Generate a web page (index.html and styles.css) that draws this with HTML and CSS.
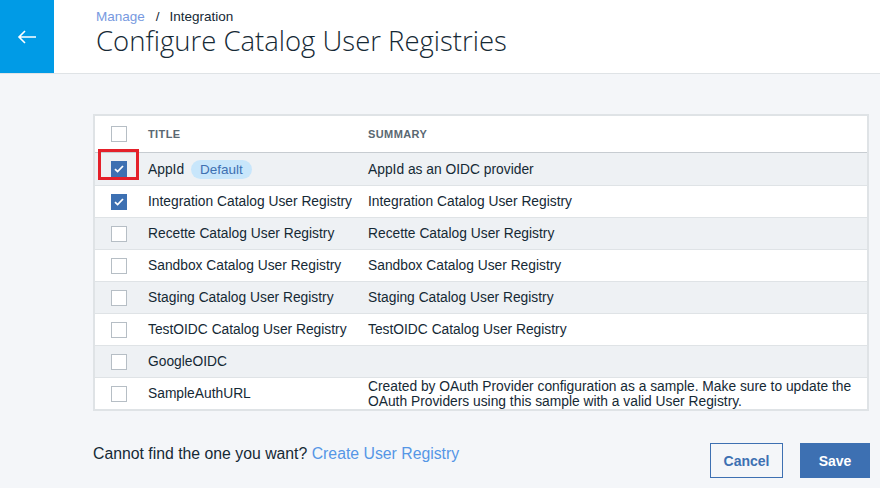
FILE: index.html
```html
<!DOCTYPE html>
<html lang="en">
<head>
<meta charset="utf-8">
<title>Configure Catalog User Registries</title>
<link rel="stylesheet" href="styles.css">
</head>
<body>
<header class="topbar">
  <div class="back">
    <svg width="20" height="14" viewBox="0 0 20 14" aria-hidden="true"><path d="M19 7H2M8 1L2 7l6 6" fill="none" stroke="#fff" stroke-width="1.6"/></svg>
  </div>
  <div class="heading">
    <div class="crumbs"><a class="crumb-link">Manage</a><span class="sep">/</span><span>Integration</span></div>
    <h1 class="title">Configure Catalog User Registries</h1>
  </div>
</header>
<main class="content">
  <div class="table">
    <div class="row head">
      <div class="cell check"><span class="box"></span></div>
      <div class="cell tcol">TITLE</div>
      <div class="cell scol">SUMMARY</div>
    </div>
    <div class="row alt">
      <div class="cell check"><span class="box on"><svg width="10" height="8" viewBox="0 0 10 8"><path d="M1 4.2l2.6 2.4L9 1" fill="none" stroke="#fff" stroke-width="1.8"/></svg></span><span class="hl"></span></div>
      <div class="cell tcol">AppId <span class="tag">Default</span></div>
      <div class="cell scol">AppId as an OIDC provider</div>
    </div>
    <div class="row">
      <div class="cell check"><span class="box on"><svg width="10" height="8" viewBox="0 0 10 8"><path d="M1 4.2l2.6 2.4L9 1" fill="none" stroke="#fff" stroke-width="1.8"/></svg></span></div>
      <div class="cell tcol">Integration Catalog User Registry</div>
      <div class="cell scol">Integration Catalog User Registry</div>
    </div>
    <div class="row alt">
      <div class="cell check"><span class="box"></span></div>
      <div class="cell tcol">Recette Catalog User Registry</div>
      <div class="cell scol">Recette Catalog User Registry</div>
    </div>
    <div class="row">
      <div class="cell check"><span class="box"></span></div>
      <div class="cell tcol">Sandbox Catalog User Registry</div>
      <div class="cell scol">Sandbox Catalog User Registry</div>
    </div>
    <div class="row alt">
      <div class="cell check"><span class="box"></span></div>
      <div class="cell tcol">Staging Catalog User Registry</div>
      <div class="cell scol">Staging Catalog User Registry</div>
    </div>
    <div class="row">
      <div class="cell check"><span class="box"></span></div>
      <div class="cell tcol">TestOIDC Catalog User Registry</div>
      <div class="cell scol">TestOIDC Catalog User Registry</div>
    </div>
    <div class="row alt">
      <div class="cell check"><span class="box"></span></div>
      <div class="cell tcol">GoogleOIDC</div>
      <div class="cell scol"></div>
    </div>
    <div class="row last">
      <div class="cell check"><span class="box"></span></div>
      <div class="cell tcol">SampleAuthURL</div>
      <div class="cell scol two">Created by OAuth Provider configuration as a sample. Make sure to update the OAuth Providers using this sample with a valid User Registry.</div>
    </div>
  </div>
  <div class="footer">
    <p class="hint">Cannot find the one you want? <a class="link">Create User Registry</a></p>
    <div class="actions">
      <button class="btn secondary">Cancel</button>
      <button class="btn primary">Save</button>
    </div>
  </div>
</main>
</body>
</html>
```

FILE: styles.css
```css
* { box-sizing: border-box; }
html, body { margin: 0; padding: 0; }
body {
  background: #f4f6f9;
  font-family: "Liberation Sans", Arial, sans-serif;
  color: #152935;
  width: 880px;
  height: 488px;
  overflow: hidden;
}
.topbar {
  display: flex;
  height: 74px;
  background: #fff;
  border-bottom: 1px solid #dfe3e6;
}
.back {
  width: 54px;
  height: 73px;
  background: #009be6;
  display: flex;
  align-items: center;
  justify-content: center;
}
.heading {
  padding: 9px 0 0 42px;
}
.crumbs {
  font-size: 13.5px;
  line-height: 16px;
  color: #152935;
}
.crumb-link { color: #7799e0; }
.sep { margin: 0 10px 0 11px; color: #152935; }
.title {
  margin: 0;
  font-family: "Open Sans", sans-serif;
  font-weight: 300;
  font-size: 27.5px;
  line-height: 32px;
  color: #152935;
  letter-spacing: 0;
}
.content {
  padding: 40px 10px 0 93px;
}
.table {
  border: 2px solid #dfe3e6;
  background: #fff;
  width: 776px;
}
.row {
  display: flex;
  height: 32px;
  border-top: 1px solid #dfe3e6;
  font-size: 13.8px;
  color: #152935;
}
.row.head {
  height: 37px;
  border-top: 0;
  border-bottom: 1px solid #c7ccd1;
}
.row.head + .row { border-top: 0; }
.row.alt { background: #eef1f4; }
.cell {
  display: flex;
  align-items: center;
}
.check {
  width: 53px;
  padding-left: 16px;
  position: relative;
}
.tcol { width: 220px; }
.scol { flex: 1; }
.head .tcol, .head .scol {
  font-size: 11px;
  font-weight: bold;
  color: #5a6872;
  letter-spacing: 0.4px;
}
.box {
  width: 16px;
  height: 16px;
  border: 1px solid #b6bec5;
  background: #fff;
  display: inline-flex;
  align-items: center;
  justify-content: center;
}
.box.on {
  background: #3d70b2;
  border-color: #3d70b2;
}
.hl {
  position: absolute;
  left: 3px;
  top: -4px;
  width: 41px;
  height: 31px;
  border: 3px solid #e4202a;
}
.tag {
  display: inline-block;
  margin-left: 7px;
  padding: 0 9px;
  height: 19px;
  line-height: 19px;
  border-radius: 10px;
  background: #c8e6fb;
  color: #3d70b2;
  font-size: 13.5px;
}
.two {
  font-size: 13.8px;
  line-height: 15px;
}
.footer {
  display: flex;
  align-items: flex-start;
  justify-content: space-between;
  padding-top: 32px;
}
.hint {
  margin: 0;
  padding-top: 2px;
  font-size: 15.8px;
  line-height: 18px;
  color: #152935;
}
.link { color: #5596e6; }
.actions {
  display: flex;
  gap: 17px;
}
.btn {
  height: 35px;
  font-family: "Liberation Sans", Arial, sans-serif;
  font-size: 14px;
  font-weight: bold;
  padding: 0 12px;
  border: 1px solid #3d70b2;
  cursor: pointer;
}
.secondary { background: transparent; color: #3d70b2; width: 73px; }
.primary { background: #3d70b2; color: #fff; width: 70px; }
```
